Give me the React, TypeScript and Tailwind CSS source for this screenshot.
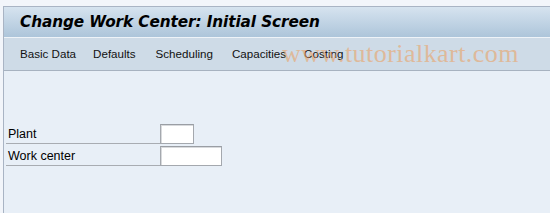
import React from "react";

export default function App() {
  return (
    <div className="w-[550px] h-[213px] bg-[#f2f5fa] overflow-hidden relative font-['Liberation_Sans',sans-serif]">
      <div className="h-[6px]" />
      <div className="ml-[3px] h-[207px] border-l border-t border-[#a9b4c4] bg-[#e8eff7] flex flex-col">
        <div className="h-[30px] bg-gradient-to-b from-[#d6e3ef] to-[#adc5da] flex items-center pl-[16px]">
          <span className="font-['DejaVu_Sans',sans-serif] font-bold italic text-[15.3px] text-black tracking-[-0.1px] leading-none mt-[1px]">
            Change Work Center: Initial Screen
          </span>
        </div>
        <div className="h-[34px] border-t border-[#eef3f8] border-b border-b-[#a7b2c0] bg-[#cedbe7] flex items-center pl-[16px] text-[11.6px] text-[#111] relative">
          <span className="mr-[17px]">Basic Data</span>
          <span className="mr-[20px]">Defaults</span>
          <span className="mr-[19px]">Scheduling</span>
          <span className="mr-[18px]">Capacities</span>
          <span>Costing</span>
          <span className="absolute left-[278px] top-[1px] font-['Liberation_Serif',serif] text-[26px] text-[#eaa468] opacity-60 tracking-[0.45px] leading-[30px]">
            www.tutorialkart.com
          </span>
        </div>
        <div className="pt-[53px] pl-[2px] flex flex-col gap-[2px]">
          <div className="flex items-end">
            <div className="w-[154px] h-[20px] border-b border-[#a8acb2] text-[12.5px] text-black pl-[2px] leading-[20px]">Plant</div>
            <div className="w-[34px] h-[20px] bg-white border border-[#a4a8ae] border-t-[#9a9ea4] shadow-[inset_1px_1px_0_#d8dadd]" />
          </div>
          <div className="flex items-end">
            <div className="w-[154px] h-[20px] border-b border-[#a8acb2] text-[12.5px] text-black pl-[2px] leading-[20px]">Work center</div>
            <div className="w-[62px] h-[20px] bg-white border border-[#a4a8ae] border-t-[#9a9ea4] shadow-[inset_1px_1px_0_#d8dadd]" />
          </div>
        </div>
      </div>
    </div>
  );
}
